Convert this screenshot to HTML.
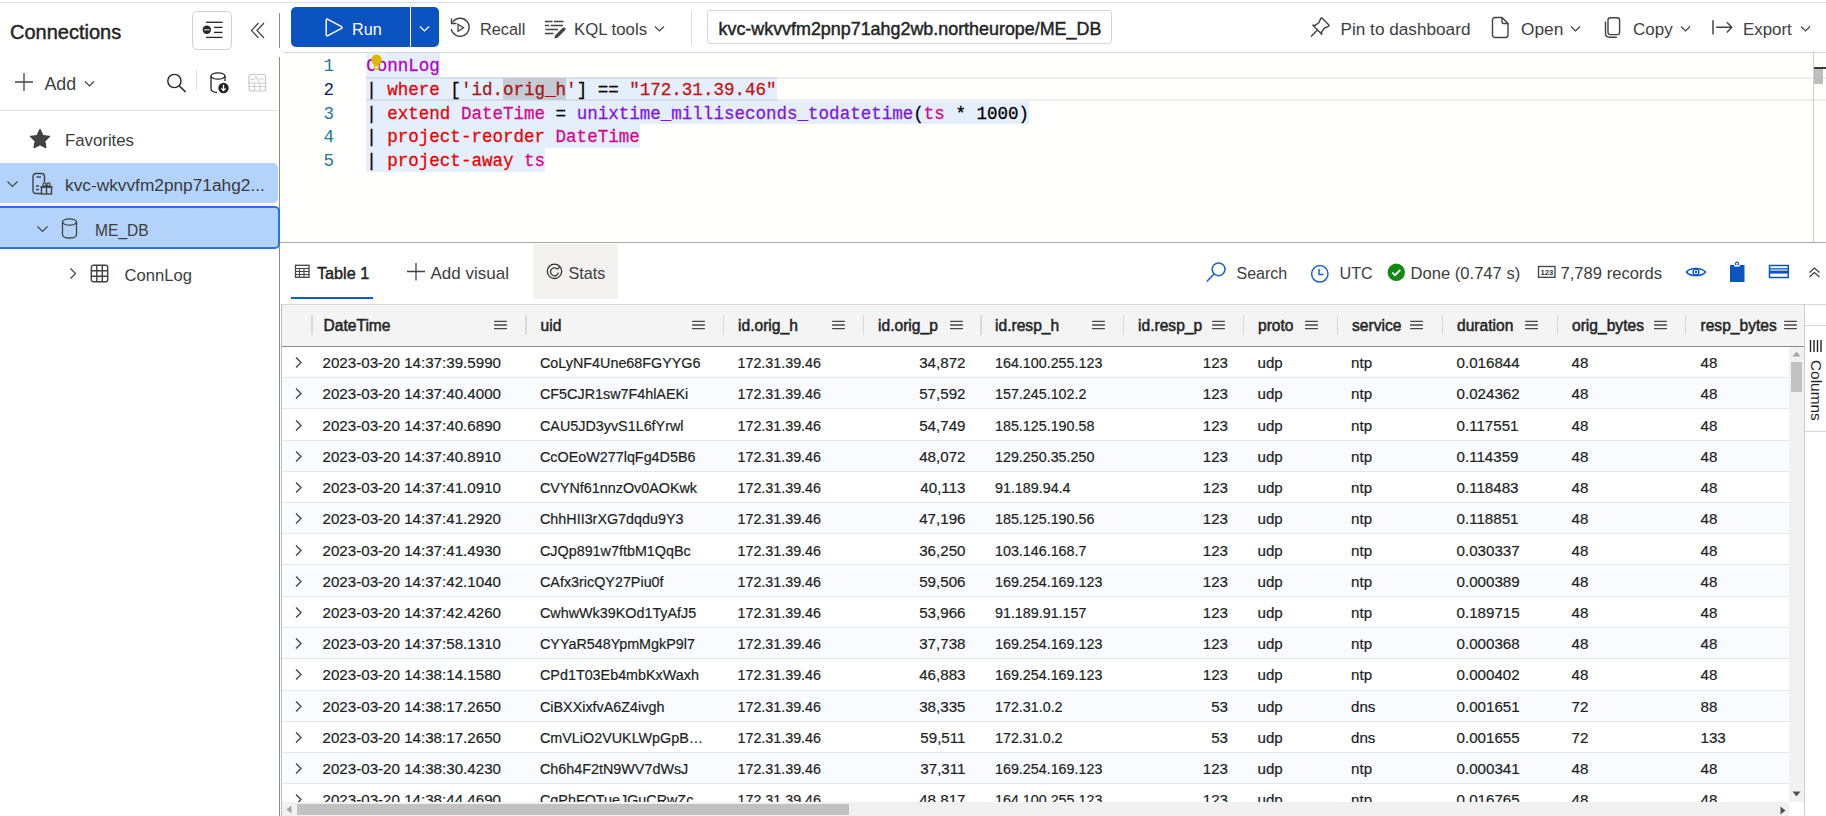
<!DOCTYPE html>
<html><head><meta charset="utf-8"><style>
html,body{margin:0;padding:0;width:1826px;height:816px;overflow:hidden;background:#fff;}
body{position:relative;font-family:'Liberation Sans',sans-serif;}
.t{position:absolute;white-space:nowrap;}
.r{position:absolute;}
svg.r{overflow:visible;}
</style></head><body>
<div class="r" style="left:0px;top:2px;width:1826px;height:1px;background:#e1e1e1;"></div>
<div class="t" style="left:10.00px;top:22px;font-size:20px;line-height:20px;color:#242424;font-weight:400;font-family:'Liberation Sans', sans-serif;-webkit-text-stroke:0.45px #242424;">Connections</div>
<div class="r" style="left:192px;top:11px;width:39.5px;height:38.8px;background:#fff;border:1px solid #d1d1d1;border-radius:5px;box-sizing:border-box"></div>
<svg class="r" style="left:200px;top:19px;" width="24" height="22" viewBox="0 0 24 22" fill="none"><line x1="6.1" y1="3.3" x2="22.5" y2="3.3" stroke="#242424" stroke-width="1.3"/><line x1="14" y1="8.4" x2="22.5" y2="8.4" stroke="#242424" stroke-width="1.3"/><line x1="14" y1="13.4" x2="22.5" y2="13.4" stroke="#242424" stroke-width="1.3"/><line x1="6.1" y1="18.4" x2="22.5" y2="18.4" stroke="#242424" stroke-width="1.3"/><circle cx="6.8" cy="10.8" r="4.2" fill="#242424"/><line x1="4" y1="10.8" x2="9.6" y2="10.8" stroke="#ccc" stroke-width="1.3"/></svg>
<svg class="r" style="left:250px;top:21px;" width="16" height="20" viewBox="0 0 16 20" fill="none"><path d="M8.5 2 L1.5 9.5 L8.5 17 M14 2 L7 9.5 L14 17" stroke="#424242" stroke-width="1.2"/></svg>
<div class="r" style="left:279px;top:13px;width:1px;height:35px;background:#8a8a8a;"></div>
<div class="r" style="left:279px;top:57px;width:1px;height:759px;background:#8a8a8a;"></div>
<svg class="r" style="left:14px;top:72px;" width="20" height="20" viewBox="0 0 20 20" fill="none"><path d="M10 1 V19 M1 10 H19" stroke="#424242" stroke-width="1.3"/></svg>
<div class="t" style="left:44.50px;top:76px;font-size:17.8px;line-height:17.8px;color:#3d3d3d;font-weight:400;font-family:'Liberation Sans', sans-serif;">Add</div>
<svg class="r" style="left:84px;top:80px;" width="12" height="8" viewBox="0 0 12 8" fill="none"><path d="M1 1.5 L5.5 6 L10 1.5" stroke="#424242" stroke-width="1.2"/></svg>
<svg class="r" style="left:165px;top:72px;" width="24" height="22" viewBox="0 0 24 22" fill="none"><circle cx="9.4" cy="9" r="6.6" stroke="#242424" stroke-width="1.4"/><path d="M14.2 13.8 L20.6 20" stroke="#242424" stroke-width="1.6"/></svg>
<div class="r" style="left:196px;top:70px;width:1px;height:20px;background:#e0e0e0;"></div>
<svg class="r" style="left:208px;top:71px;" width="24" height="24" viewBox="0 0 24 24" fill="none"><path d="M3 5 V18 C3 20 6 21.5 9 21.5 M17 5 V10" stroke="#242424" stroke-width="1.3"/><ellipse cx="10" cy="5" rx="7" ry="3.2" stroke="#242424" stroke-width="1.3"/><circle cx="15.5" cy="17" r="5.2" fill="#242424"/><path d="M15.5 13.8 V19.5 M13.3 17.4 L15.5 19.6 L17.7 17.4" stroke="#fff" stroke-width="1.3"/></svg>
<svg class="r" style="left:247px;top:73px;" width="21" height="19" viewBox="0 0 21 19" fill="none"><rect x="2" y="1.5" width="16.5" height="16.5" rx="2" stroke="#c8c8c8" stroke-width="1.2"/><path d="M4 6.5 L7 6.5 L9 3.5 L11.5 8 L13.5 5.5 L16.5 6.5" stroke="#c8c8c8" stroke-width="1"/><path d="M2 10 H18.5 M2 13.5 H18.5 M7.5 10 V18 M13 10 V18" stroke="#d0d0d0" stroke-width="1.2"/></svg>
<div class="r" style="left:0px;top:110px;width:279px;height:1px;background:#e1e1e1;"></div>
<svg class="r" style="left:27.5px;top:127px;" width="24" height="23" viewBox="0 0 24 23" fill="none"><path d="M12.00 2.60 L14.94 8.55 L21.51 9.51 L16.76 14.15 L17.88 20.69 L12.00 17.60 L6.12 20.69 L7.24 14.15 L2.49 9.51 L9.06 8.55 Z" fill="#424242" stroke="#424242" stroke-width="1.3" stroke-linejoin="round"/></svg>
<div class="t" style="left:65.00px;top:133px;font-size:16.8px;line-height:16.8px;color:#3d3d3d;font-weight:400;font-family:'Liberation Sans', sans-serif;">Favorites</div>
<div class="r" style="left:-5px;top:163px;width:283px;height:40px;background:#b3d3fb;border-radius:5px"></div>
<svg class="r" style="left:6px;top:180px;" width="13" height="9" viewBox="0 0 13 9" fill="none"><path d="M1.5 1.5 L6.5 6.5 L11.5 1.5" stroke="#424242" stroke-width="1.2"/></svg>
<svg class="r" style="left:31px;top:172px;" width="23" height="24" viewBox="0 0 23 24" fill="none"><path d="M10 21.5 H5 C3.2 21.5 2 20.3 2 18.5 V4.5 C2 2.7 3.2 1.5 5 1.5 H10.5 C12.3 1.5 13.5 2.7 13.5 4.5 V10" stroke="#424242" stroke-width="1.4"/><path d="M5.5 5 H10" stroke="#424242" stroke-width="1.4"/><path d="M5 14 H8 M5 17.5 H8" stroke="#424242" stroke-width="1.4"/><rect x="10.5" y="15" width="10" height="7" stroke="#424242" stroke-width="1.4"/><path d="M9.5 15 H21.5 M15.5 13 V22" stroke="#424242" stroke-width="1.4"/><circle cx="13.5" cy="12.5" r="1.6" stroke="#424242" stroke-width="1.2"/><circle cx="17.5" cy="12.5" r="1.6" stroke="#424242" stroke-width="1.2"/></svg>
<div class="t" style="left:65.00px;top:177px;font-size:17.3px;line-height:17.3px;color:#3a3a3a;font-weight:400;font-family:'Liberation Sans', sans-serif;">kvc-wkvvfm2pnp71ahg2...</div>
<div class="r" style="left:-4px;top:206px;width:283.5px;height:42.5px;background:#b3d3fb;border:2px solid #2a70e6;border-radius:5px;box-sizing:border-box"></div>
<svg class="r" style="left:36px;top:225px;" width="13" height="9" viewBox="0 0 13 9" fill="none"><path d="M1.5 1.5 L6.5 6.5 L11.5 1.5" stroke="#424242" stroke-width="1.2"/></svg>
<svg class="r" style="left:60px;top:217px;" width="19" height="23" viewBox="0 0 19 23" fill="none"><ellipse cx="9.5" cy="5" rx="7" ry="3.2" stroke="#424242" stroke-width="1.3"/><path d="M2.5 5 V17.5 C2.5 19.5 5.5 21 9.5 21 C13.5 21 16.5 19.5 16.5 17.5 V5" stroke="#424242" stroke-width="1.3"/></svg>
<div class="t" style="left:95.00px;top:223px;font-size:15.6px;line-height:15.6px;color:#3d3d3d;font-weight:400;font-family:'Liberation Sans', sans-serif;">ME_DB</div>
<svg class="r" style="left:69px;top:267px;" width="9" height="13" viewBox="0 0 9 13" fill="none"><path d="M1.5 1.5 L6.5 6.5 L1.5 11.5" stroke="#424242" stroke-width="1.2"/></svg>
<svg class="r" style="left:90px;top:264px;" width="20" height="20" viewBox="0 0 20 20" fill="none"><rect x="1.3" y="1.3" width="16.4" height="16.4" rx="2" stroke="#424242" stroke-width="1.4"/><path d="M1.3 6.8 H17.7 M1.3 12.3 H17.7 M6.8 1.3 V17.7 M12.3 1.3 V17.7" stroke="#424242" stroke-width="1.4"/></svg>
<div class="t" style="left:124.50px;top:268px;font-size:16.6px;line-height:16.6px;color:#3d3d3d;font-weight:400;font-family:'Liberation Sans', sans-serif;">ConnLog</div>
<div class="r" style="left:291px;top:7px;width:148px;height:40px;background:#0b53c1;border-radius:5px"></div>
<div class="r" style="left:410px;top:7px;width:1px;height:40px;background:#ffffff;"></div>
<svg class="r" style="left:323px;top:17px;" width="21" height="21" viewBox="0 0 21 21" fill="none"><path d="M3.2 3.2 C3.2 2.2 4 1.8 4.9 2.3 L18.5 9.6 C19.3 10.1 19.3 11 18.5 11.4 L4.9 18.7 C4 19.2 3.2 18.7 3.2 17.8 Z" stroke="#fff" stroke-width="1.4"/></svg>
<div class="t" style="left:352.00px;top:21px;font-size:16.2px;line-height:16.2px;color:#ffffff;font-weight:400;font-family:'Liberation Sans', sans-serif;">Run</div>
<svg class="r" style="left:419px;top:25px;" width="12" height="8" viewBox="0 0 12 8" fill="none"><path d="M1 1.5 L5.5 6 L10 1.5" stroke="#fff" stroke-width="1.2"/></svg>
<svg class="r" style="left:448px;top:16px;" width="24" height="24" viewBox="0 0 24 24" fill="none"><path d="M4.5 6.5 A9 9 0 1 1 3.3 13" stroke="#424242" stroke-width="1.4"/><path d="M2.5 2.5 V7.5 H7.5" stroke="#424242" stroke-width="1.4" transform="translate(1,0)"/><path d="M10 8.3 L15.5 11.8 L10 15.3 Z" stroke="#424242" stroke-width="1.3"/></svg>
<div class="t" style="left:480.00px;top:21px;font-size:16.3px;line-height:16.3px;color:#3d3d3d;font-weight:400;font-family:'Liberation Sans', sans-serif;">Recall</div>
<svg class="r" style="left:543px;top:18px;" width="24" height="22" viewBox="0 0 24 22" fill="none"><path d="M2 3.5 H9.5 M11 3.5 H20.5 M2 7.5 H6 M7.5 7.5 H20 M2.5 11.5 H15 M2 15.5 H10.5" stroke="#424242" stroke-width="1.3"/><path d="M12 17.5 L19.5 10 C20.3 9.2 21.8 9.2 22.3 10 C22.8 10.7 22.6 11.6 22 12.2 L14.5 19.7 L11.5 20.5 Z" fill="#424242"/></svg>
<div class="t" style="left:574.00px;top:22px;font-size:16.8px;line-height:16.8px;color:#3d3d3d;font-weight:400;font-family:'Liberation Sans', sans-serif;">KQL tools</div>
<svg class="r" style="left:654px;top:25px;" width="12" height="8" viewBox="0 0 12 8" fill="none"><path d="M1 1.5 L5.5 6 L10 1.5" stroke="#424242" stroke-width="1.2"/></svg>
<div class="r" style="left:691px;top:10px;width:1px;height:36px;background:#e0e0e0;"></div>
<div class="r" style="left:707px;top:10px;width:405px;height:34px;background:#fff;border:1px solid #d6d6d6;border-radius:3px;box-sizing:border-box"></div>
<div class="t" style="left:718.50px;top:21px;font-size:17.9px;line-height:17.9px;color:#242424;font-weight:400;font-family:'Liberation Sans', sans-serif;-webkit-text-stroke:0.45px #242424;">kvc-wkvvfm2pnp71ahg2wb.northeurope/ME_DB</div>
<svg class="r" style="left:1309px;top:16px;" width="22" height="22" viewBox="0 0 22 22" fill="none"><path d="M8.5 14 L2 20.5" stroke="#424242" stroke-width="1.4"/><path d="M13.2 2.3 L19.7 8.8 C20.2 9.3 20 10 19.4 10.3 L15.5 12 L12.6 15.8 L12.8 18.2 L3.8 9.2 L6.2 9.4 L10 6.5 L11.7 2.6 C12 2 12.7 1.8 13.2 2.3 Z" stroke="#424242" stroke-width="1.4" stroke-linejoin="round"/></svg>
<div class="t" style="left:1340.50px;top:21px;font-size:17.2px;line-height:17.2px;color:#3d3d3d;font-weight:400;font-family:'Liberation Sans', sans-serif;">Pin to dashboard</div>
<svg class="r" style="left:1491px;top:16px;" width="19" height="23" viewBox="0 0 19 23" fill="none"><path d="M4 1.5 H11 L17 7.5 V19 C17 20.4 16 21.5 14.5 21.5 H4 C2.6 21.5 1.5 20.4 1.5 19 V4 C1.5 2.6 2.6 1.5 4 1.5 Z M11 1.5 V6 C11 7 11.5 7.5 12.5 7.5 H17" stroke="#424242" stroke-width="1.4" stroke-linejoin="round"/></svg>
<div class="t" style="left:1521.00px;top:21px;font-size:17.3px;line-height:17.3px;color:#3d3d3d;font-weight:400;font-family:'Liberation Sans', sans-serif;">Open</div>
<svg class="r" style="left:1570px;top:25px;" width="12" height="8" viewBox="0 0 12 8" fill="none"><path d="M1 1.5 L5.5 6 L10 1.5" stroke="#424242" stroke-width="1.2"/></svg>
<svg class="r" style="left:1602px;top:16px;" width="20" height="23" viewBox="0 0 20 23" fill="none"><rect x="6" y="1.8" width="11.6" height="16.8" rx="2.3" stroke="#424242" stroke-width="1.4"/><path d="M3.5 5.5 V17.5 C3.5 19.8 5.2 21.2 7.5 21.2 H14.8" stroke="#424242" stroke-width="1.4"/></svg>
<div class="t" style="left:1633.00px;top:21px;font-size:17.0px;line-height:17.0px;color:#3d3d3d;font-weight:400;font-family:'Liberation Sans', sans-serif;">Copy</div>
<svg class="r" style="left:1680px;top:25px;" width="12" height="8" viewBox="0 0 12 8" fill="none"><path d="M1 1.5 L5.5 6 L10 1.5" stroke="#424242" stroke-width="1.2"/></svg>
<svg class="r" style="left:1709px;top:17px;" width="25" height="20" viewBox="0 0 25 20" fill="none"><path d="M4 3.3 V17.6" stroke="#424242" stroke-width="1.5"/><path d="M7.2 10.3 H22.8 M17.8 5.3 L22.8 10.3 L17.8 15.5" stroke="#424242" stroke-width="1.4"/></svg>
<div class="t" style="left:1743.00px;top:22px;font-size:16.9px;line-height:16.9px;color:#3d3d3d;font-weight:400;font-family:'Liberation Sans', sans-serif;">Export</div>
<svg class="r" style="left:1799.5px;top:25px;" width="12" height="8" viewBox="0 0 12 8" fill="none"><path d="M1 1.5 L5.5 6 L10 1.5" stroke="#424242" stroke-width="1.2"/></svg>
<div class="r" style="left:283px;top:52px;width:1543px;height:1px;background:#d6d6d6;"></div>
<div class="r" style="left:280px;top:53px;width:1546px;height:189px;background:#fffffe;"></div>
<div class="r" style="left:366.2px;top:53.0px;width:73.67px;height:23.75px;background:#e5eefb;"></div>
<div class="r" style="left:366.2px;top:76.75px;width:410.44px;height:23.75px;background:#e5eefb;"></div>
<div class="r" style="left:366.2px;top:100.5px;width:663.01px;height:23.75px;background:#e5eefb;"></div>
<div class="r" style="left:366.2px;top:124.25px;width:273.62px;height:23.75px;background:#e5eefb;"></div>
<div class="r" style="left:366.2px;top:148.0px;width:178.91px;height:23.8px;background:#e5eefb;"></div>
<div class="r" style="left:366.2px;top:53.3px;width:19.7px;height:19.3px;background:#eaf3fd;"></div>
<div class="r" style="left:366px;top:77px;width:1460px;height:2px;background:rgba(0,0,0,0.065);"></div>
<div class="r" style="left:366px;top:99px;width:1460px;height:2px;background:rgba(0,0,0,0.065);"></div>
<div class="r" style="left:503.01px;top:77.5px;width:63.14px;height:22px;background:#c6cbd3;"></div>
<div class="t" style="left:323.50px;top:58px;font-size:17.54px;line-height:17.54px;color:#237893;font-weight:400;font-family:'Liberation Mono', monospace;transform-origin:0 13px;transform:scaleY(1.09)">1</div>
<div class="t" style="left:323.50px;top:82px;font-size:17.54px;line-height:17.54px;color:#0b216f;font-weight:400;font-family:'Liberation Mono', monospace;transform-origin:0 13px;transform:scaleY(1.09)">2</div>
<div class="t" style="left:323.50px;top:106px;font-size:17.54px;line-height:17.54px;color:#237893;font-weight:400;font-family:'Liberation Mono', monospace;transform-origin:0 13px;transform:scaleY(1.09)">3</div>
<div class="t" style="left:323.50px;top:129px;font-size:17.54px;line-height:17.54px;color:#237893;font-weight:400;font-family:'Liberation Mono', monospace;transform-origin:0 13px;transform:scaleY(1.09)">4</div>
<div class="t" style="left:323.50px;top:153px;font-size:17.54px;line-height:17.54px;color:#237893;font-weight:400;font-family:'Liberation Mono', monospace;transform-origin:0 13px;transform:scaleY(1.09)">5</div>
<div class="t" style="left:366.20px;top:58px;font-size:17.54px;line-height:17.54px;color:#000;font-weight:400;font-family:'Liberation Mono', monospace;white-space:pre;-webkit-text-stroke:0.25px currentColor;transform-origin:0 13px;transform:scaleY(1.09)"><span style="color:#b000c8">ConnLog</span></div>
<div class="t" style="left:366.20px;top:82px;font-size:17.54px;line-height:17.54px;color:#000;font-weight:400;font-family:'Liberation Mono', monospace;white-space:pre;-webkit-text-stroke:0.25px currentColor;transform-origin:0 13px;transform:scaleY(1.09)"><span style="color:#000">| </span><span style="color:#e80000">where</span><span style="color:#000"> [</span><span style="color:#a31515">'id.</span><span style="color:#a31515">orig_h</span><span style="color:#a31515">'</span><span style="color:#000">] == </span><span style="color:#c40f0f">"172.31.39.46"</span></div>
<div class="t" style="left:366.20px;top:106px;font-size:17.54px;line-height:17.54px;color:#000;font-weight:400;font-family:'Liberation Mono', monospace;white-space:pre;-webkit-text-stroke:0.25px currentColor;transform-origin:0 13px;transform:scaleY(1.09)"><span style="color:#000">| </span><span style="color:#e80000">extend</span><span style="color:#000"> </span><span style="color:#d4068c">DateTime</span><span style="color:#000"> = </span><span style="color:#7b16e6">unixtime_milliseconds_todatetime</span><span style="color:#000">(</span><span style="color:#d4068c">ts</span><span style="color:#000"> * 1000)</span></div>
<div class="t" style="left:366.20px;top:129px;font-size:17.54px;line-height:17.54px;color:#000;font-weight:400;font-family:'Liberation Mono', monospace;white-space:pre;-webkit-text-stroke:0.25px currentColor;transform-origin:0 13px;transform:scaleY(1.09)"><span style="color:#000">| </span><span style="color:#e80000">project-reorder</span><span style="color:#000"> </span><span style="color:#d4068c">DateTime</span></div>
<div class="t" style="left:366.20px;top:153px;font-size:17.54px;line-height:17.54px;color:#000;font-weight:400;font-family:'Liberation Mono', monospace;white-space:pre;-webkit-text-stroke:0.25px currentColor;transform-origin:0 13px;transform:scaleY(1.09)"><span style="color:#000">| </span><span style="color:#e80000">project-away</span><span style="color:#000"> </span><span style="color:#d4068c">ts</span></div>
<svg class="r" style="left:369px;top:53px;" width="15" height="19" viewBox="0 0 15 19" fill="none"><circle cx="7.5" cy="6.7" r="5.2" fill="#e0b800"/><rect x="4.9" y="10" width="5.2" height="7" fill="#e0b800"/><rect x="6.2" y="13.2" width="2.6" height="2.5" fill="#f4f0d8"/></svg>
<div class="r" style="left:1813px;top:53px;width:1px;height:190px;background:#cfcfcf;"></div>
<div class="r" style="left:1814px;top:67px;width:12px;height:2px;background:#3a3a3a;"></div>
<div class="r" style="left:1814px;top:69px;width:9px;height:15px;background:#bdbdbd;"></div>
<div class="r" style="left:280px;top:242px;width:1546px;height:1px;background:#a8a8a8;"></div>
<div class="r" style="left:533px;top:244px;width:85px;height:54.5px;background:#f3f2f1;"></div>
<svg class="r" style="left:294px;top:264px;" width="17" height="15" viewBox="0 0 17 15" fill="none"><rect x="1.5" y="1.3" width="13.5" height="12" stroke="#424242" stroke-width="1.3"/><path d="M1.5 4.5 H15 M1.5 7.5 H15 M1.5 10.5 H15 M5.5 4.5 V13 M10 4.5 V13" stroke="#424242" stroke-width="1.1"/></svg>
<div class="t" style="left:317.00px;top:265px;font-size:16.2px;line-height:16.2px;color:#242424;font-weight:400;font-family:'Liberation Sans', sans-serif;-webkit-text-stroke:0.45px #242424;">Table 1</div>
<div class="r" style="left:291px;top:297px;width:82px;height:2px;background:#0f5bd0;"></div>
<svg class="r" style="left:406px;top:262px;" width="20" height="19" viewBox="0 0 20 19" fill="none"><path d="M10 1 V18.5 M1 9.5 H19" stroke="#424242" stroke-width="1.3"/></svg>
<div class="t" style="left:430.50px;top:265px;font-size:17.0px;line-height:17.0px;color:#3d3d3d;font-weight:400;font-family:'Liberation Sans', sans-serif;">Add visual</div>
<svg class="r" style="left:545px;top:263px;" width="18" height="17" viewBox="0 0 18 17" fill="none"><circle cx="9.5" cy="8.3" r="7.2" stroke="#333" stroke-width="1.3"/><path d="M12.56 6.23 A4.0 4.0 0 1 0 13.44 9.49" stroke="#333" stroke-width="1.3"/><path d="M12.56 6.23 L14.6 3.6" stroke="#333" stroke-width="1.2"/></svg>
<div class="t" style="left:568.50px;top:265px;font-size:16.2px;line-height:16.2px;color:#3d3d3d;font-weight:400;font-family:'Liberation Sans', sans-serif;">Stats</div>
<svg class="r" style="left:1205px;top:261px;" width="23" height="23" viewBox="0 0 23 23" fill="none"><circle cx="13.6" cy="8.3" r="6.4" stroke="#1a5fd0" stroke-width="1.5"/><path d="M9 13 L1.8 20.5" stroke="#1a5fd0" stroke-width="1.6"/></svg>
<div class="t" style="left:1236.50px;top:266px;font-size:16.0px;line-height:16.0px;color:#3d3d3d;font-weight:400;font-family:'Liberation Sans', sans-serif;">Search</div>
<svg class="r" style="left:1310px;top:264px;" width="20" height="20" viewBox="0 0 20 20" fill="none"><circle cx="9.8" cy="9.8" r="8.2" stroke="#1a5fd0" stroke-width="1.5"/><path d="M9 5 V10.5 H13.5" stroke="#1a5fd0" stroke-width="1.5"/></svg>
<div class="t" style="left:1339.50px;top:265px;font-size:16.2px;line-height:16.2px;color:#3d3d3d;font-weight:400;font-family:'Liberation Sans', sans-serif;">UTC</div>
<svg class="r" style="left:1387px;top:263px;" width="19" height="19" viewBox="0 0 19 19" fill="none"><circle cx="9.3" cy="9.3" r="8.7" fill="#128a12"/><path d="M5.3 9.6 L8 12.2 L13.3 6.8" stroke="#fff" stroke-width="1.8"/></svg>
<div class="t" style="left:1410.50px;top:266px;font-size:16.6px;line-height:16.6px;color:#3d3d3d;font-weight:400;font-family:'Liberation Sans', sans-serif;">Done (0.747 s)</div>
<svg class="r" style="left:1537px;top:265px;" width="20" height="14" viewBox="0 0 20 14" fill="none"><rect x="1.5" y="1.5" width="16.5" height="10.8" stroke="#424242" stroke-width="1.3"/></svg>
<div class="t" style="left:1540.60px;top:269px;font-size:7.6px;line-height:7.6px;color:#303030;font-weight:700;font-family:'Liberation Sans', sans-serif;">123</div>
<div class="t" style="left:1560.50px;top:266px;font-size:16.6px;line-height:16.6px;color:#3d3d3d;font-weight:400;font-family:'Liberation Sans', sans-serif;">7,789 records</div>
<svg class="r" style="left:1685px;top:266px;" width="22" height="12" viewBox="0 0 22 12" fill="none"><path d="M1.5 6 C5 1.2 16.5 1.2 20.5 6 C16.5 10.8 5 10.8 1.5 6 Z" stroke="#0b55c3" stroke-width="1.5"/><circle cx="11" cy="6" r="2.9" stroke="#0b55c3" stroke-width="1.4"/><circle cx="11" cy="6" r="1.2" fill="#0b55c3"/></svg>
<svg class="r" style="left:1729px;top:261px;" width="17" height="22" viewBox="0 0 17 22" fill="none"><path d="M1 4 H6 V2.5 C6 1.2 7 0.5 8 0.5 C9 0.5 10 1.2 10 2.5 V4 H15.5 V21 H1 Z" fill="#0b55c3"/><circle cx="8" cy="2.8" r="1" fill="#fff"/><rect x="5.3" y="4" width="5.4" height="1.6" fill="#fff"/></svg>
<svg class="r" style="left:1768px;top:264px;" width="22" height="15" viewBox="0 0 22 15" fill="none"><rect x="1.5" y="1.5" width="18.8" height="12" stroke="#0b55c3" stroke-width="1.5"/><rect x="1.5" y="4.2" width="18.8" height="1.3" fill="#0b55c3"/><rect x="1.5" y="6.6" width="18.8" height="3" fill="#0b55c3"/></svg>
<svg class="r" style="left:1808px;top:267px;" width="14" height="11" viewBox="0 0 14 11" fill="none"><path d="M1.5 5.5 L6.5 1 L11.5 5.5 M1.5 10 L6.5 5.5 L11.5 10" stroke="#424242" stroke-width="1.3"/></svg>
<div class="r" style="left:281px;top:304px;width:1523px;height:1px;background:#d8d8d8;"></div>
<div class="r" style="left:282px;top:305px;width:1522px;height:41px;background:#f4f4f4;"></div>
<div class="r" style="left:281px;top:345.5px;width:1523px;height:1.5px;background:#8c8c8c;"></div>
<div class="r" style="left:281px;top:304px;width:1px;height:512px;background:#b9bec4;"></div>
<div class="r" style="left:311px;top:315px;width:1.5px;height:20px;background:#d5dadf;"></div>
<div class="r" style="left:525px;top:315px;width:1.5px;height:20px;background:#d5dadf;"></div>
<div class="r" style="left:722.5px;top:315px;width:1.5px;height:20px;background:#d5dadf;"></div>
<div class="r" style="left:862.5px;top:315px;width:1.5px;height:20px;background:#d5dadf;"></div>
<div class="r" style="left:980px;top:315px;width:1.5px;height:20px;background:#d5dadf;"></div>
<div class="r" style="left:1122.5px;top:315px;width:1.5px;height:20px;background:#d5dadf;"></div>
<div class="r" style="left:1242.5px;top:315px;width:1.5px;height:20px;background:#d5dadf;"></div>
<div class="r" style="left:1336.5px;top:315px;width:1.5px;height:20px;background:#d5dadf;"></div>
<div class="r" style="left:1441.5px;top:315px;width:1.5px;height:20px;background:#d5dadf;"></div>
<div class="r" style="left:1556.5px;top:315px;width:1.5px;height:20px;background:#d5dadf;"></div>
<div class="r" style="left:1684.5px;top:315px;width:1.5px;height:20px;background:#d5dadf;"></div>
<div class="t" style="left:323.50px;top:318px;font-size:15.6px;line-height:15.6px;color:#242424;font-weight:400;font-family:'Liberation Sans', sans-serif;-webkit-text-stroke:0.5px #242424;">DateTime</div>
<svg class="r" style="left:494px;top:320px;" width="13" height="11" viewBox="0 0 13 11" fill="none"><path d="M0.6 1.3 H12.4 M0.6 5 H12.4 M0.6 8.6 H12.4" stroke="#474747" stroke-width="1.3" stroke-linecap="round"/></svg>
<div class="t" style="left:540.50px;top:318px;font-size:15.6px;line-height:15.6px;color:#242424;font-weight:400;font-family:'Liberation Sans', sans-serif;-webkit-text-stroke:0.5px #242424;">uid</div>
<svg class="r" style="left:691.5px;top:320px;" width="13" height="11" viewBox="0 0 13 11" fill="none"><path d="M0.6 1.3 H12.4 M0.6 5 H12.4 M0.6 8.6 H12.4" stroke="#474747" stroke-width="1.3" stroke-linecap="round"/></svg>
<div class="t" style="left:738.00px;top:318px;font-size:15.6px;line-height:15.6px;color:#242424;font-weight:400;font-family:'Liberation Sans', sans-serif;-webkit-text-stroke:0.5px #242424;">id.orig_h</div>
<svg class="r" style="left:832px;top:320px;" width="13" height="11" viewBox="0 0 13 11" fill="none"><path d="M0.6 1.3 H12.4 M0.6 5 H12.4 M0.6 8.6 H12.4" stroke="#474747" stroke-width="1.3" stroke-linecap="round"/></svg>
<div class="t" style="left:878.00px;top:318px;font-size:15.6px;line-height:15.6px;color:#242424;font-weight:400;font-family:'Liberation Sans', sans-serif;-webkit-text-stroke:0.5px #242424;">id.orig_p</div>
<svg class="r" style="left:950px;top:320px;" width="13" height="11" viewBox="0 0 13 11" fill="none"><path d="M0.6 1.3 H12.4 M0.6 5 H12.4 M0.6 8.6 H12.4" stroke="#474747" stroke-width="1.3" stroke-linecap="round"/></svg>
<div class="t" style="left:995.00px;top:318px;font-size:15.6px;line-height:15.6px;color:#242424;font-weight:400;font-family:'Liberation Sans', sans-serif;-webkit-text-stroke:0.5px #242424;">id.resp_h</div>
<svg class="r" style="left:1091.5px;top:320px;" width="13" height="11" viewBox="0 0 13 11" fill="none"><path d="M0.6 1.3 H12.4 M0.6 5 H12.4 M0.6 8.6 H12.4" stroke="#474747" stroke-width="1.3" stroke-linecap="round"/></svg>
<div class="t" style="left:1138.00px;top:318px;font-size:15.6px;line-height:15.6px;color:#242424;font-weight:400;font-family:'Liberation Sans', sans-serif;-webkit-text-stroke:0.5px #242424;">id.resp_p</div>
<svg class="r" style="left:1211.5px;top:320px;" width="13" height="11" viewBox="0 0 13 11" fill="none"><path d="M0.6 1.3 H12.4 M0.6 5 H12.4 M0.6 8.6 H12.4" stroke="#474747" stroke-width="1.3" stroke-linecap="round"/></svg>
<div class="t" style="left:1258.00px;top:318px;font-size:15.6px;line-height:15.6px;color:#242424;font-weight:400;font-family:'Liberation Sans', sans-serif;-webkit-text-stroke:0.5px #242424;">proto</div>
<svg class="r" style="left:1305px;top:320px;" width="13" height="11" viewBox="0 0 13 11" fill="none"><path d="M0.6 1.3 H12.4 M0.6 5 H12.4 M0.6 8.6 H12.4" stroke="#474747" stroke-width="1.3" stroke-linecap="round"/></svg>
<div class="t" style="left:1352.00px;top:318px;font-size:15.6px;line-height:15.6px;color:#242424;font-weight:400;font-family:'Liberation Sans', sans-serif;-webkit-text-stroke:0.5px #242424;">service</div>
<svg class="r" style="left:1410px;top:320px;" width="13" height="11" viewBox="0 0 13 11" fill="none"><path d="M0.6 1.3 H12.4 M0.6 5 H12.4 M0.6 8.6 H12.4" stroke="#474747" stroke-width="1.3" stroke-linecap="round"/></svg>
<div class="t" style="left:1457.00px;top:318px;font-size:15.6px;line-height:15.6px;color:#242424;font-weight:400;font-family:'Liberation Sans', sans-serif;-webkit-text-stroke:0.5px #242424;">duration</div>
<svg class="r" style="left:1525px;top:320px;" width="13" height="11" viewBox="0 0 13 11" fill="none"><path d="M0.6 1.3 H12.4 M0.6 5 H12.4 M0.6 8.6 H12.4" stroke="#474747" stroke-width="1.3" stroke-linecap="round"/></svg>
<div class="t" style="left:1572.00px;top:318px;font-size:15.6px;line-height:15.6px;color:#242424;font-weight:400;font-family:'Liberation Sans', sans-serif;-webkit-text-stroke:0.5px #242424;">orig_bytes</div>
<svg class="r" style="left:1654px;top:320px;" width="13" height="11" viewBox="0 0 13 11" fill="none"><path d="M0.6 1.3 H12.4 M0.6 5 H12.4 M0.6 8.6 H12.4" stroke="#474747" stroke-width="1.3" stroke-linecap="round"/></svg>
<div class="t" style="left:1700.50px;top:318px;font-size:15.6px;line-height:15.6px;color:#242424;font-weight:400;font-family:'Liberation Sans', sans-serif;-webkit-text-stroke:0.5px #242424;">resp_bytes</div>
<svg class="r" style="left:1784px;top:320px;" width="13" height="11" viewBox="0 0 13 11" fill="none"><path d="M0.6 1.3 H12.4 M0.6 5 H12.4 M0.6 8.6 H12.4" stroke="#474747" stroke-width="1.3" stroke-linecap="round"/></svg>
<div class="r" style="left:282px;top:347px;width:1507px;height:455px;overflow:hidden">
<div class="r" style="left:0;top:-1.00px;width:1507px;height:31.25px;background:#ffffff"></div>
<div class="r" style="left:0;top:30.25px;width:1507px;height:31.25px;background:#fafbfe"></div>
<div class="r" style="left:0;top:61.50px;width:1507px;height:31.25px;background:#ffffff"></div>
<div class="r" style="left:0;top:92.75px;width:1507px;height:31.25px;background:#fafbfe"></div>
<div class="r" style="left:0;top:124.00px;width:1507px;height:31.25px;background:#ffffff"></div>
<div class="r" style="left:0;top:155.25px;width:1507px;height:31.25px;background:#fafbfe"></div>
<div class="r" style="left:0;top:186.50px;width:1507px;height:31.25px;background:#ffffff"></div>
<div class="r" style="left:0;top:217.75px;width:1507px;height:31.25px;background:#fafbfe"></div>
<div class="r" style="left:0;top:249.00px;width:1507px;height:31.25px;background:#ffffff"></div>
<div class="r" style="left:0;top:280.25px;width:1507px;height:31.25px;background:#fafbfe"></div>
<div class="r" style="left:0;top:311.50px;width:1507px;height:31.25px;background:#ffffff"></div>
<div class="r" style="left:0;top:342.75px;width:1507px;height:31.25px;background:#fafbfe"></div>
<div class="r" style="left:0;top:374.00px;width:1507px;height:31.25px;background:#ffffff"></div>
<div class="r" style="left:0;top:405.25px;width:1507px;height:31.25px;background:#fafbfe"></div>
<div class="r" style="left:0;top:436.50px;width:1507px;height:31.25px;background:#ffffff"></div>
<div class="r" style="left:0;top:30px;width:1507px;height:1px;background:#e3e6ea"></div>
<div class="r" style="left:0;top:61px;width:1507px;height:1px;background:#e3e6ea"></div>
<div class="r" style="left:0;top:93px;width:1507px;height:1px;background:#e3e6ea"></div>
<div class="r" style="left:0;top:124px;width:1507px;height:1px;background:#e3e6ea"></div>
<div class="r" style="left:0;top:155px;width:1507px;height:1px;background:#e3e6ea"></div>
<div class="r" style="left:0;top:186px;width:1507px;height:1px;background:#e3e6ea"></div>
<div class="r" style="left:0;top:217px;width:1507px;height:1px;background:#e3e6ea"></div>
<div class="r" style="left:0;top:249px;width:1507px;height:1px;background:#e3e6ea"></div>
<div class="r" style="left:0;top:280px;width:1507px;height:1px;background:#e3e6ea"></div>
<div class="r" style="left:0;top:311px;width:1507px;height:1px;background:#e3e6ea"></div>
<div class="r" style="left:0;top:343px;width:1507px;height:1px;background:#e3e6ea"></div>
<div class="r" style="left:0;top:374px;width:1507px;height:1px;background:#e3e6ea"></div>
<div class="r" style="left:0;top:405px;width:1507px;height:1px;background:#e3e6ea"></div>
<div class="r" style="left:0;top:436px;width:1507px;height:1px;background:#e3e6ea"></div>
<div class="r" style="left:0;top:467px;width:1507px;height:1px;background:#e3e6ea"></div>
</div>
<svg class="r" style="left:294px;top:356px;" width="10" height="12" viewBox="0 0 10 12" fill="none"><path d="M2 1.5 L7 6.5 L2 11.5" stroke="#424242" stroke-width="1.3"/></svg>
<div class="t" style="left:322.50px;top:355px;font-size:15.15px;line-height:15.15px;color:#201f1e;font-weight:400;font-family:'Liberation Sans', sans-serif;-webkit-text-stroke:0.2px #201f1e;">2023-03-20 14:37:39.5990</div>
<div class="t" style="left:540.00px;top:356px;font-size:14.35px;line-height:14.35px;color:#201f1e;font-weight:400;font-family:'Liberation Sans', sans-serif;-webkit-text-stroke:0.2px #201f1e;">CoLyNF4Une68FGYYG6</div>
<div class="t" style="left:737.50px;top:356px;font-size:14.3px;line-height:14.3px;color:#201f1e;font-weight:400;font-family:'Liberation Sans', sans-serif;-webkit-text-stroke:0.2px #201f1e;">172.31.39.46</div>
<div class="t" style="right:860.50px;top:355px;font-size:15.15px;line-height:15.15px;color:#201f1e;font-weight:400;-webkit-text-stroke:0.2px #201f1e;">34,872</div>
<div class="t" style="left:995.00px;top:356px;font-size:14.3px;line-height:14.3px;color:#201f1e;font-weight:400;font-family:'Liberation Sans', sans-serif;-webkit-text-stroke:0.2px #201f1e;">164.100.255.123</div>
<div class="t" style="right:598.00px;top:355px;font-size:15.15px;line-height:15.15px;color:#201f1e;font-weight:400;-webkit-text-stroke:0.2px #201f1e;">123</div>
<div class="t" style="left:1257.50px;top:355px;font-size:15.15px;line-height:15.15px;color:#201f1e;font-weight:400;font-family:'Liberation Sans', sans-serif;-webkit-text-stroke:0.2px #201f1e;">udp</div>
<div class="t" style="left:1351.00px;top:355px;font-size:15.15px;line-height:15.15px;color:#201f1e;font-weight:400;font-family:'Liberation Sans', sans-serif;-webkit-text-stroke:0.2px #201f1e;">ntp</div>
<div class="t" style="left:1456.50px;top:355px;font-size:15.15px;line-height:15.15px;color:#201f1e;font-weight:400;font-family:'Liberation Sans', sans-serif;-webkit-text-stroke:0.2px #201f1e;">0.016844</div>
<div class="t" style="left:1571.50px;top:355px;font-size:15.15px;line-height:15.15px;color:#201f1e;font-weight:400;font-family:'Liberation Sans', sans-serif;-webkit-text-stroke:0.2px #201f1e;">48</div>
<div class="t" style="left:1700.50px;top:355px;font-size:15.15px;line-height:15.15px;color:#201f1e;font-weight:400;font-family:'Liberation Sans', sans-serif;-webkit-text-stroke:0.2px #201f1e;">48</div>
<svg class="r" style="left:294px;top:387px;" width="10" height="12" viewBox="0 0 10 12" fill="none"><path d="M2 1.5 L7 6.5 L2 11.5" stroke="#424242" stroke-width="1.3"/></svg>
<div class="t" style="left:322.50px;top:386px;font-size:15.15px;line-height:15.15px;color:#201f1e;font-weight:400;font-family:'Liberation Sans', sans-serif;-webkit-text-stroke:0.2px #201f1e;">2023-03-20 14:37:40.4000</div>
<div class="t" style="left:540.00px;top:387px;font-size:14.35px;line-height:14.35px;color:#201f1e;font-weight:400;font-family:'Liberation Sans', sans-serif;-webkit-text-stroke:0.2px #201f1e;">CF5CJR1sw7F4hlAEKi</div>
<div class="t" style="left:737.50px;top:387px;font-size:14.3px;line-height:14.3px;color:#201f1e;font-weight:400;font-family:'Liberation Sans', sans-serif;-webkit-text-stroke:0.2px #201f1e;">172.31.39.46</div>
<div class="t" style="right:860.50px;top:386px;font-size:15.15px;line-height:15.15px;color:#201f1e;font-weight:400;-webkit-text-stroke:0.2px #201f1e;">57,592</div>
<div class="t" style="left:995.00px;top:387px;font-size:14.3px;line-height:14.3px;color:#201f1e;font-weight:400;font-family:'Liberation Sans', sans-serif;-webkit-text-stroke:0.2px #201f1e;">157.245.102.2</div>
<div class="t" style="right:598.00px;top:386px;font-size:15.15px;line-height:15.15px;color:#201f1e;font-weight:400;-webkit-text-stroke:0.2px #201f1e;">123</div>
<div class="t" style="left:1257.50px;top:386px;font-size:15.15px;line-height:15.15px;color:#201f1e;font-weight:400;font-family:'Liberation Sans', sans-serif;-webkit-text-stroke:0.2px #201f1e;">udp</div>
<div class="t" style="left:1351.00px;top:386px;font-size:15.15px;line-height:15.15px;color:#201f1e;font-weight:400;font-family:'Liberation Sans', sans-serif;-webkit-text-stroke:0.2px #201f1e;">ntp</div>
<div class="t" style="left:1456.50px;top:386px;font-size:15.15px;line-height:15.15px;color:#201f1e;font-weight:400;font-family:'Liberation Sans', sans-serif;-webkit-text-stroke:0.2px #201f1e;">0.024362</div>
<div class="t" style="left:1571.50px;top:386px;font-size:15.15px;line-height:15.15px;color:#201f1e;font-weight:400;font-family:'Liberation Sans', sans-serif;-webkit-text-stroke:0.2px #201f1e;">48</div>
<div class="t" style="left:1700.50px;top:386px;font-size:15.15px;line-height:15.15px;color:#201f1e;font-weight:400;font-family:'Liberation Sans', sans-serif;-webkit-text-stroke:0.2px #201f1e;">48</div>
<svg class="r" style="left:294px;top:419px;" width="10" height="12" viewBox="0 0 10 12" fill="none"><path d="M2 1.5 L7 6.5 L2 11.5" stroke="#424242" stroke-width="1.3"/></svg>
<div class="t" style="left:322.50px;top:418px;font-size:15.15px;line-height:15.15px;color:#201f1e;font-weight:400;font-family:'Liberation Sans', sans-serif;-webkit-text-stroke:0.2px #201f1e;">2023-03-20 14:37:40.6890</div>
<div class="t" style="left:540.00px;top:419px;font-size:14.35px;line-height:14.35px;color:#201f1e;font-weight:400;font-family:'Liberation Sans', sans-serif;-webkit-text-stroke:0.2px #201f1e;">CAU5JD3yvS1L6fYrwl</div>
<div class="t" style="left:737.50px;top:419px;font-size:14.3px;line-height:14.3px;color:#201f1e;font-weight:400;font-family:'Liberation Sans', sans-serif;-webkit-text-stroke:0.2px #201f1e;">172.31.39.46</div>
<div class="t" style="right:860.50px;top:418px;font-size:15.15px;line-height:15.15px;color:#201f1e;font-weight:400;-webkit-text-stroke:0.2px #201f1e;">54,749</div>
<div class="t" style="left:995.00px;top:419px;font-size:14.3px;line-height:14.3px;color:#201f1e;font-weight:400;font-family:'Liberation Sans', sans-serif;-webkit-text-stroke:0.2px #201f1e;">185.125.190.58</div>
<div class="t" style="right:598.00px;top:418px;font-size:15.15px;line-height:15.15px;color:#201f1e;font-weight:400;-webkit-text-stroke:0.2px #201f1e;">123</div>
<div class="t" style="left:1257.50px;top:418px;font-size:15.15px;line-height:15.15px;color:#201f1e;font-weight:400;font-family:'Liberation Sans', sans-serif;-webkit-text-stroke:0.2px #201f1e;">udp</div>
<div class="t" style="left:1351.00px;top:418px;font-size:15.15px;line-height:15.15px;color:#201f1e;font-weight:400;font-family:'Liberation Sans', sans-serif;-webkit-text-stroke:0.2px #201f1e;">ntp</div>
<div class="t" style="left:1456.50px;top:418px;font-size:15.15px;line-height:15.15px;color:#201f1e;font-weight:400;font-family:'Liberation Sans', sans-serif;-webkit-text-stroke:0.2px #201f1e;">0.117551</div>
<div class="t" style="left:1571.50px;top:418px;font-size:15.15px;line-height:15.15px;color:#201f1e;font-weight:400;font-family:'Liberation Sans', sans-serif;-webkit-text-stroke:0.2px #201f1e;">48</div>
<div class="t" style="left:1700.50px;top:418px;font-size:15.15px;line-height:15.15px;color:#201f1e;font-weight:400;font-family:'Liberation Sans', sans-serif;-webkit-text-stroke:0.2px #201f1e;">48</div>
<svg class="r" style="left:294px;top:450px;" width="10" height="12" viewBox="0 0 10 12" fill="none"><path d="M2 1.5 L7 6.5 L2 11.5" stroke="#424242" stroke-width="1.3"/></svg>
<div class="t" style="left:322.50px;top:449px;font-size:15.15px;line-height:15.15px;color:#201f1e;font-weight:400;font-family:'Liberation Sans', sans-serif;-webkit-text-stroke:0.2px #201f1e;">2023-03-20 14:37:40.8910</div>
<div class="t" style="left:540.00px;top:450px;font-size:14.35px;line-height:14.35px;color:#201f1e;font-weight:400;font-family:'Liberation Sans', sans-serif;-webkit-text-stroke:0.2px #201f1e;">CcOEoW277lqFg4D5B6</div>
<div class="t" style="left:737.50px;top:450px;font-size:14.3px;line-height:14.3px;color:#201f1e;font-weight:400;font-family:'Liberation Sans', sans-serif;-webkit-text-stroke:0.2px #201f1e;">172.31.39.46</div>
<div class="t" style="right:860.50px;top:449px;font-size:15.15px;line-height:15.15px;color:#201f1e;font-weight:400;-webkit-text-stroke:0.2px #201f1e;">48,072</div>
<div class="t" style="left:995.00px;top:450px;font-size:14.3px;line-height:14.3px;color:#201f1e;font-weight:400;font-family:'Liberation Sans', sans-serif;-webkit-text-stroke:0.2px #201f1e;">129.250.35.250</div>
<div class="t" style="right:598.00px;top:449px;font-size:15.15px;line-height:15.15px;color:#201f1e;font-weight:400;-webkit-text-stroke:0.2px #201f1e;">123</div>
<div class="t" style="left:1257.50px;top:449px;font-size:15.15px;line-height:15.15px;color:#201f1e;font-weight:400;font-family:'Liberation Sans', sans-serif;-webkit-text-stroke:0.2px #201f1e;">udp</div>
<div class="t" style="left:1351.00px;top:449px;font-size:15.15px;line-height:15.15px;color:#201f1e;font-weight:400;font-family:'Liberation Sans', sans-serif;-webkit-text-stroke:0.2px #201f1e;">ntp</div>
<div class="t" style="left:1456.50px;top:449px;font-size:15.15px;line-height:15.15px;color:#201f1e;font-weight:400;font-family:'Liberation Sans', sans-serif;-webkit-text-stroke:0.2px #201f1e;">0.114359</div>
<div class="t" style="left:1571.50px;top:449px;font-size:15.15px;line-height:15.15px;color:#201f1e;font-weight:400;font-family:'Liberation Sans', sans-serif;-webkit-text-stroke:0.2px #201f1e;">48</div>
<div class="t" style="left:1700.50px;top:449px;font-size:15.15px;line-height:15.15px;color:#201f1e;font-weight:400;font-family:'Liberation Sans', sans-serif;-webkit-text-stroke:0.2px #201f1e;">48</div>
<svg class="r" style="left:294px;top:481px;" width="10" height="12" viewBox="0 0 10 12" fill="none"><path d="M2 1.5 L7 6.5 L2 11.5" stroke="#424242" stroke-width="1.3"/></svg>
<div class="t" style="left:322.50px;top:480px;font-size:15.15px;line-height:15.15px;color:#201f1e;font-weight:400;font-family:'Liberation Sans', sans-serif;-webkit-text-stroke:0.2px #201f1e;">2023-03-20 14:37:41.0910</div>
<div class="t" style="left:540.00px;top:481px;font-size:14.35px;line-height:14.35px;color:#201f1e;font-weight:400;font-family:'Liberation Sans', sans-serif;-webkit-text-stroke:0.2px #201f1e;">CVYNf61nnzOv0AOKwk</div>
<div class="t" style="left:737.50px;top:481px;font-size:14.3px;line-height:14.3px;color:#201f1e;font-weight:400;font-family:'Liberation Sans', sans-serif;-webkit-text-stroke:0.2px #201f1e;">172.31.39.46</div>
<div class="t" style="right:860.50px;top:480px;font-size:15.15px;line-height:15.15px;color:#201f1e;font-weight:400;-webkit-text-stroke:0.2px #201f1e;">40,113</div>
<div class="t" style="left:995.00px;top:481px;font-size:14.3px;line-height:14.3px;color:#201f1e;font-weight:400;font-family:'Liberation Sans', sans-serif;-webkit-text-stroke:0.2px #201f1e;">91.189.94.4</div>
<div class="t" style="right:598.00px;top:480px;font-size:15.15px;line-height:15.15px;color:#201f1e;font-weight:400;-webkit-text-stroke:0.2px #201f1e;">123</div>
<div class="t" style="left:1257.50px;top:480px;font-size:15.15px;line-height:15.15px;color:#201f1e;font-weight:400;font-family:'Liberation Sans', sans-serif;-webkit-text-stroke:0.2px #201f1e;">udp</div>
<div class="t" style="left:1351.00px;top:480px;font-size:15.15px;line-height:15.15px;color:#201f1e;font-weight:400;font-family:'Liberation Sans', sans-serif;-webkit-text-stroke:0.2px #201f1e;">ntp</div>
<div class="t" style="left:1456.50px;top:480px;font-size:15.15px;line-height:15.15px;color:#201f1e;font-weight:400;font-family:'Liberation Sans', sans-serif;-webkit-text-stroke:0.2px #201f1e;">0.118483</div>
<div class="t" style="left:1571.50px;top:480px;font-size:15.15px;line-height:15.15px;color:#201f1e;font-weight:400;font-family:'Liberation Sans', sans-serif;-webkit-text-stroke:0.2px #201f1e;">48</div>
<div class="t" style="left:1700.50px;top:480px;font-size:15.15px;line-height:15.15px;color:#201f1e;font-weight:400;font-family:'Liberation Sans', sans-serif;-webkit-text-stroke:0.2px #201f1e;">48</div>
<svg class="r" style="left:294px;top:512px;" width="10" height="12" viewBox="0 0 10 12" fill="none"><path d="M2 1.5 L7 6.5 L2 11.5" stroke="#424242" stroke-width="1.3"/></svg>
<div class="t" style="left:322.50px;top:511px;font-size:15.15px;line-height:15.15px;color:#201f1e;font-weight:400;font-family:'Liberation Sans', sans-serif;-webkit-text-stroke:0.2px #201f1e;">2023-03-20 14:37:41.2920</div>
<div class="t" style="left:540.00px;top:512px;font-size:14.35px;line-height:14.35px;color:#201f1e;font-weight:400;font-family:'Liberation Sans', sans-serif;-webkit-text-stroke:0.2px #201f1e;">ChhHII3rXG7dqdu9Y3</div>
<div class="t" style="left:737.50px;top:512px;font-size:14.3px;line-height:14.3px;color:#201f1e;font-weight:400;font-family:'Liberation Sans', sans-serif;-webkit-text-stroke:0.2px #201f1e;">172.31.39.46</div>
<div class="t" style="right:860.50px;top:511px;font-size:15.15px;line-height:15.15px;color:#201f1e;font-weight:400;-webkit-text-stroke:0.2px #201f1e;">47,196</div>
<div class="t" style="left:995.00px;top:512px;font-size:14.3px;line-height:14.3px;color:#201f1e;font-weight:400;font-family:'Liberation Sans', sans-serif;-webkit-text-stroke:0.2px #201f1e;">185.125.190.56</div>
<div class="t" style="right:598.00px;top:511px;font-size:15.15px;line-height:15.15px;color:#201f1e;font-weight:400;-webkit-text-stroke:0.2px #201f1e;">123</div>
<div class="t" style="left:1257.50px;top:511px;font-size:15.15px;line-height:15.15px;color:#201f1e;font-weight:400;font-family:'Liberation Sans', sans-serif;-webkit-text-stroke:0.2px #201f1e;">udp</div>
<div class="t" style="left:1351.00px;top:511px;font-size:15.15px;line-height:15.15px;color:#201f1e;font-weight:400;font-family:'Liberation Sans', sans-serif;-webkit-text-stroke:0.2px #201f1e;">ntp</div>
<div class="t" style="left:1456.50px;top:511px;font-size:15.15px;line-height:15.15px;color:#201f1e;font-weight:400;font-family:'Liberation Sans', sans-serif;-webkit-text-stroke:0.2px #201f1e;">0.118851</div>
<div class="t" style="left:1571.50px;top:511px;font-size:15.15px;line-height:15.15px;color:#201f1e;font-weight:400;font-family:'Liberation Sans', sans-serif;-webkit-text-stroke:0.2px #201f1e;">48</div>
<div class="t" style="left:1700.50px;top:511px;font-size:15.15px;line-height:15.15px;color:#201f1e;font-weight:400;font-family:'Liberation Sans', sans-serif;-webkit-text-stroke:0.2px #201f1e;">48</div>
<svg class="r" style="left:294px;top:544px;" width="10" height="12" viewBox="0 0 10 12" fill="none"><path d="M2 1.5 L7 6.5 L2 11.5" stroke="#424242" stroke-width="1.3"/></svg>
<div class="t" style="left:322.50px;top:543px;font-size:15.15px;line-height:15.15px;color:#201f1e;font-weight:400;font-family:'Liberation Sans', sans-serif;-webkit-text-stroke:0.2px #201f1e;">2023-03-20 14:37:41.4930</div>
<div class="t" style="left:540.00px;top:544px;font-size:14.35px;line-height:14.35px;color:#201f1e;font-weight:400;font-family:'Liberation Sans', sans-serif;-webkit-text-stroke:0.2px #201f1e;">CJQp891w7ftbM1QqBc</div>
<div class="t" style="left:737.50px;top:544px;font-size:14.3px;line-height:14.3px;color:#201f1e;font-weight:400;font-family:'Liberation Sans', sans-serif;-webkit-text-stroke:0.2px #201f1e;">172.31.39.46</div>
<div class="t" style="right:860.50px;top:543px;font-size:15.15px;line-height:15.15px;color:#201f1e;font-weight:400;-webkit-text-stroke:0.2px #201f1e;">36,250</div>
<div class="t" style="left:995.00px;top:544px;font-size:14.3px;line-height:14.3px;color:#201f1e;font-weight:400;font-family:'Liberation Sans', sans-serif;-webkit-text-stroke:0.2px #201f1e;">103.146.168.7</div>
<div class="t" style="right:598.00px;top:543px;font-size:15.15px;line-height:15.15px;color:#201f1e;font-weight:400;-webkit-text-stroke:0.2px #201f1e;">123</div>
<div class="t" style="left:1257.50px;top:543px;font-size:15.15px;line-height:15.15px;color:#201f1e;font-weight:400;font-family:'Liberation Sans', sans-serif;-webkit-text-stroke:0.2px #201f1e;">udp</div>
<div class="t" style="left:1351.00px;top:543px;font-size:15.15px;line-height:15.15px;color:#201f1e;font-weight:400;font-family:'Liberation Sans', sans-serif;-webkit-text-stroke:0.2px #201f1e;">ntp</div>
<div class="t" style="left:1456.50px;top:543px;font-size:15.15px;line-height:15.15px;color:#201f1e;font-weight:400;font-family:'Liberation Sans', sans-serif;-webkit-text-stroke:0.2px #201f1e;">0.030337</div>
<div class="t" style="left:1571.50px;top:543px;font-size:15.15px;line-height:15.15px;color:#201f1e;font-weight:400;font-family:'Liberation Sans', sans-serif;-webkit-text-stroke:0.2px #201f1e;">48</div>
<div class="t" style="left:1700.50px;top:543px;font-size:15.15px;line-height:15.15px;color:#201f1e;font-weight:400;font-family:'Liberation Sans', sans-serif;-webkit-text-stroke:0.2px #201f1e;">48</div>
<svg class="r" style="left:294px;top:575px;" width="10" height="12" viewBox="0 0 10 12" fill="none"><path d="M2 1.5 L7 6.5 L2 11.5" stroke="#424242" stroke-width="1.3"/></svg>
<div class="t" style="left:322.50px;top:574px;font-size:15.15px;line-height:15.15px;color:#201f1e;font-weight:400;font-family:'Liberation Sans', sans-serif;-webkit-text-stroke:0.2px #201f1e;">2023-03-20 14:37:42.1040</div>
<div class="t" style="left:540.00px;top:575px;font-size:14.35px;line-height:14.35px;color:#201f1e;font-weight:400;font-family:'Liberation Sans', sans-serif;-webkit-text-stroke:0.2px #201f1e;">CAfx3ricQY27Piu0f</div>
<div class="t" style="left:737.50px;top:575px;font-size:14.3px;line-height:14.3px;color:#201f1e;font-weight:400;font-family:'Liberation Sans', sans-serif;-webkit-text-stroke:0.2px #201f1e;">172.31.39.46</div>
<div class="t" style="right:860.50px;top:574px;font-size:15.15px;line-height:15.15px;color:#201f1e;font-weight:400;-webkit-text-stroke:0.2px #201f1e;">59,506</div>
<div class="t" style="left:995.00px;top:575px;font-size:14.3px;line-height:14.3px;color:#201f1e;font-weight:400;font-family:'Liberation Sans', sans-serif;-webkit-text-stroke:0.2px #201f1e;">169.254.169.123</div>
<div class="t" style="right:598.00px;top:574px;font-size:15.15px;line-height:15.15px;color:#201f1e;font-weight:400;-webkit-text-stroke:0.2px #201f1e;">123</div>
<div class="t" style="left:1257.50px;top:574px;font-size:15.15px;line-height:15.15px;color:#201f1e;font-weight:400;font-family:'Liberation Sans', sans-serif;-webkit-text-stroke:0.2px #201f1e;">udp</div>
<div class="t" style="left:1351.00px;top:574px;font-size:15.15px;line-height:15.15px;color:#201f1e;font-weight:400;font-family:'Liberation Sans', sans-serif;-webkit-text-stroke:0.2px #201f1e;">ntp</div>
<div class="t" style="left:1456.50px;top:574px;font-size:15.15px;line-height:15.15px;color:#201f1e;font-weight:400;font-family:'Liberation Sans', sans-serif;-webkit-text-stroke:0.2px #201f1e;">0.000389</div>
<div class="t" style="left:1571.50px;top:574px;font-size:15.15px;line-height:15.15px;color:#201f1e;font-weight:400;font-family:'Liberation Sans', sans-serif;-webkit-text-stroke:0.2px #201f1e;">48</div>
<div class="t" style="left:1700.50px;top:574px;font-size:15.15px;line-height:15.15px;color:#201f1e;font-weight:400;font-family:'Liberation Sans', sans-serif;-webkit-text-stroke:0.2px #201f1e;">48</div>
<svg class="r" style="left:294px;top:606px;" width="10" height="12" viewBox="0 0 10 12" fill="none"><path d="M2 1.5 L7 6.5 L2 11.5" stroke="#424242" stroke-width="1.3"/></svg>
<div class="t" style="left:322.50px;top:605px;font-size:15.15px;line-height:15.15px;color:#201f1e;font-weight:400;font-family:'Liberation Sans', sans-serif;-webkit-text-stroke:0.2px #201f1e;">2023-03-20 14:37:42.4260</div>
<div class="t" style="left:540.00px;top:606px;font-size:14.35px;line-height:14.35px;color:#201f1e;font-weight:400;font-family:'Liberation Sans', sans-serif;-webkit-text-stroke:0.2px #201f1e;">CwhwWk39KOd1TyAfJ5</div>
<div class="t" style="left:737.50px;top:606px;font-size:14.3px;line-height:14.3px;color:#201f1e;font-weight:400;font-family:'Liberation Sans', sans-serif;-webkit-text-stroke:0.2px #201f1e;">172.31.39.46</div>
<div class="t" style="right:860.50px;top:605px;font-size:15.15px;line-height:15.15px;color:#201f1e;font-weight:400;-webkit-text-stroke:0.2px #201f1e;">53,966</div>
<div class="t" style="left:995.00px;top:606px;font-size:14.3px;line-height:14.3px;color:#201f1e;font-weight:400;font-family:'Liberation Sans', sans-serif;-webkit-text-stroke:0.2px #201f1e;">91.189.91.157</div>
<div class="t" style="right:598.00px;top:605px;font-size:15.15px;line-height:15.15px;color:#201f1e;font-weight:400;-webkit-text-stroke:0.2px #201f1e;">123</div>
<div class="t" style="left:1257.50px;top:605px;font-size:15.15px;line-height:15.15px;color:#201f1e;font-weight:400;font-family:'Liberation Sans', sans-serif;-webkit-text-stroke:0.2px #201f1e;">udp</div>
<div class="t" style="left:1351.00px;top:605px;font-size:15.15px;line-height:15.15px;color:#201f1e;font-weight:400;font-family:'Liberation Sans', sans-serif;-webkit-text-stroke:0.2px #201f1e;">ntp</div>
<div class="t" style="left:1456.50px;top:605px;font-size:15.15px;line-height:15.15px;color:#201f1e;font-weight:400;font-family:'Liberation Sans', sans-serif;-webkit-text-stroke:0.2px #201f1e;">0.189715</div>
<div class="t" style="left:1571.50px;top:605px;font-size:15.15px;line-height:15.15px;color:#201f1e;font-weight:400;font-family:'Liberation Sans', sans-serif;-webkit-text-stroke:0.2px #201f1e;">48</div>
<div class="t" style="left:1700.50px;top:605px;font-size:15.15px;line-height:15.15px;color:#201f1e;font-weight:400;font-family:'Liberation Sans', sans-serif;-webkit-text-stroke:0.2px #201f1e;">48</div>
<svg class="r" style="left:294px;top:637px;" width="10" height="12" viewBox="0 0 10 12" fill="none"><path d="M2 1.5 L7 6.5 L2 11.5" stroke="#424242" stroke-width="1.3"/></svg>
<div class="t" style="left:322.50px;top:636px;font-size:15.15px;line-height:15.15px;color:#201f1e;font-weight:400;font-family:'Liberation Sans', sans-serif;-webkit-text-stroke:0.2px #201f1e;">2023-03-20 14:37:58.1310</div>
<div class="t" style="left:540.00px;top:637px;font-size:14.35px;line-height:14.35px;color:#201f1e;font-weight:400;font-family:'Liberation Sans', sans-serif;-webkit-text-stroke:0.2px #201f1e;">CYYaR548YpmMgkP9l7</div>
<div class="t" style="left:737.50px;top:637px;font-size:14.3px;line-height:14.3px;color:#201f1e;font-weight:400;font-family:'Liberation Sans', sans-serif;-webkit-text-stroke:0.2px #201f1e;">172.31.39.46</div>
<div class="t" style="right:860.50px;top:636px;font-size:15.15px;line-height:15.15px;color:#201f1e;font-weight:400;-webkit-text-stroke:0.2px #201f1e;">37,738</div>
<div class="t" style="left:995.00px;top:637px;font-size:14.3px;line-height:14.3px;color:#201f1e;font-weight:400;font-family:'Liberation Sans', sans-serif;-webkit-text-stroke:0.2px #201f1e;">169.254.169.123</div>
<div class="t" style="right:598.00px;top:636px;font-size:15.15px;line-height:15.15px;color:#201f1e;font-weight:400;-webkit-text-stroke:0.2px #201f1e;">123</div>
<div class="t" style="left:1257.50px;top:636px;font-size:15.15px;line-height:15.15px;color:#201f1e;font-weight:400;font-family:'Liberation Sans', sans-serif;-webkit-text-stroke:0.2px #201f1e;">udp</div>
<div class="t" style="left:1351.00px;top:636px;font-size:15.15px;line-height:15.15px;color:#201f1e;font-weight:400;font-family:'Liberation Sans', sans-serif;-webkit-text-stroke:0.2px #201f1e;">ntp</div>
<div class="t" style="left:1456.50px;top:636px;font-size:15.15px;line-height:15.15px;color:#201f1e;font-weight:400;font-family:'Liberation Sans', sans-serif;-webkit-text-stroke:0.2px #201f1e;">0.000368</div>
<div class="t" style="left:1571.50px;top:636px;font-size:15.15px;line-height:15.15px;color:#201f1e;font-weight:400;font-family:'Liberation Sans', sans-serif;-webkit-text-stroke:0.2px #201f1e;">48</div>
<div class="t" style="left:1700.50px;top:636px;font-size:15.15px;line-height:15.15px;color:#201f1e;font-weight:400;font-family:'Liberation Sans', sans-serif;-webkit-text-stroke:0.2px #201f1e;">48</div>
<svg class="r" style="left:294px;top:668px;" width="10" height="12" viewBox="0 0 10 12" fill="none"><path d="M2 1.5 L7 6.5 L2 11.5" stroke="#424242" stroke-width="1.3"/></svg>
<div class="t" style="left:322.50px;top:667px;font-size:15.15px;line-height:15.15px;color:#201f1e;font-weight:400;font-family:'Liberation Sans', sans-serif;-webkit-text-stroke:0.2px #201f1e;">2023-03-20 14:38:14.1580</div>
<div class="t" style="left:540.00px;top:668px;font-size:14.35px;line-height:14.35px;color:#201f1e;font-weight:400;font-family:'Liberation Sans', sans-serif;-webkit-text-stroke:0.2px #201f1e;">CPd1T03Eb4mbKxWaxh</div>
<div class="t" style="left:737.50px;top:668px;font-size:14.3px;line-height:14.3px;color:#201f1e;font-weight:400;font-family:'Liberation Sans', sans-serif;-webkit-text-stroke:0.2px #201f1e;">172.31.39.46</div>
<div class="t" style="right:860.50px;top:667px;font-size:15.15px;line-height:15.15px;color:#201f1e;font-weight:400;-webkit-text-stroke:0.2px #201f1e;">46,883</div>
<div class="t" style="left:995.00px;top:668px;font-size:14.3px;line-height:14.3px;color:#201f1e;font-weight:400;font-family:'Liberation Sans', sans-serif;-webkit-text-stroke:0.2px #201f1e;">169.254.169.123</div>
<div class="t" style="right:598.00px;top:667px;font-size:15.15px;line-height:15.15px;color:#201f1e;font-weight:400;-webkit-text-stroke:0.2px #201f1e;">123</div>
<div class="t" style="left:1257.50px;top:667px;font-size:15.15px;line-height:15.15px;color:#201f1e;font-weight:400;font-family:'Liberation Sans', sans-serif;-webkit-text-stroke:0.2px #201f1e;">udp</div>
<div class="t" style="left:1351.00px;top:667px;font-size:15.15px;line-height:15.15px;color:#201f1e;font-weight:400;font-family:'Liberation Sans', sans-serif;-webkit-text-stroke:0.2px #201f1e;">ntp</div>
<div class="t" style="left:1456.50px;top:667px;font-size:15.15px;line-height:15.15px;color:#201f1e;font-weight:400;font-family:'Liberation Sans', sans-serif;-webkit-text-stroke:0.2px #201f1e;">0.000402</div>
<div class="t" style="left:1571.50px;top:667px;font-size:15.15px;line-height:15.15px;color:#201f1e;font-weight:400;font-family:'Liberation Sans', sans-serif;-webkit-text-stroke:0.2px #201f1e;">48</div>
<div class="t" style="left:1700.50px;top:667px;font-size:15.15px;line-height:15.15px;color:#201f1e;font-weight:400;font-family:'Liberation Sans', sans-serif;-webkit-text-stroke:0.2px #201f1e;">48</div>
<svg class="r" style="left:294px;top:700px;" width="10" height="12" viewBox="0 0 10 12" fill="none"><path d="M2 1.5 L7 6.5 L2 11.5" stroke="#424242" stroke-width="1.3"/></svg>
<div class="t" style="left:322.50px;top:699px;font-size:15.15px;line-height:15.15px;color:#201f1e;font-weight:400;font-family:'Liberation Sans', sans-serif;-webkit-text-stroke:0.2px #201f1e;">2023-03-20 14:38:17.2650</div>
<div class="t" style="left:540.00px;top:700px;font-size:14.35px;line-height:14.35px;color:#201f1e;font-weight:400;font-family:'Liberation Sans', sans-serif;-webkit-text-stroke:0.2px #201f1e;">CiBXXixfvA6Z4ivgh</div>
<div class="t" style="left:737.50px;top:700px;font-size:14.3px;line-height:14.3px;color:#201f1e;font-weight:400;font-family:'Liberation Sans', sans-serif;-webkit-text-stroke:0.2px #201f1e;">172.31.39.46</div>
<div class="t" style="right:860.50px;top:699px;font-size:15.15px;line-height:15.15px;color:#201f1e;font-weight:400;-webkit-text-stroke:0.2px #201f1e;">38,335</div>
<div class="t" style="left:995.00px;top:700px;font-size:14.3px;line-height:14.3px;color:#201f1e;font-weight:400;font-family:'Liberation Sans', sans-serif;-webkit-text-stroke:0.2px #201f1e;">172.31.0.2</div>
<div class="t" style="right:598.00px;top:699px;font-size:15.15px;line-height:15.15px;color:#201f1e;font-weight:400;-webkit-text-stroke:0.2px #201f1e;">53</div>
<div class="t" style="left:1257.50px;top:699px;font-size:15.15px;line-height:15.15px;color:#201f1e;font-weight:400;font-family:'Liberation Sans', sans-serif;-webkit-text-stroke:0.2px #201f1e;">udp</div>
<div class="t" style="left:1351.00px;top:699px;font-size:15.15px;line-height:15.15px;color:#201f1e;font-weight:400;font-family:'Liberation Sans', sans-serif;-webkit-text-stroke:0.2px #201f1e;">dns</div>
<div class="t" style="left:1456.50px;top:699px;font-size:15.15px;line-height:15.15px;color:#201f1e;font-weight:400;font-family:'Liberation Sans', sans-serif;-webkit-text-stroke:0.2px #201f1e;">0.001651</div>
<div class="t" style="left:1571.50px;top:699px;font-size:15.15px;line-height:15.15px;color:#201f1e;font-weight:400;font-family:'Liberation Sans', sans-serif;-webkit-text-stroke:0.2px #201f1e;">72</div>
<div class="t" style="left:1700.50px;top:699px;font-size:15.15px;line-height:15.15px;color:#201f1e;font-weight:400;font-family:'Liberation Sans', sans-serif;-webkit-text-stroke:0.2px #201f1e;">88</div>
<svg class="r" style="left:294px;top:731px;" width="10" height="12" viewBox="0 0 10 12" fill="none"><path d="M2 1.5 L7 6.5 L2 11.5" stroke="#424242" stroke-width="1.3"/></svg>
<div class="t" style="left:322.50px;top:730px;font-size:15.15px;line-height:15.15px;color:#201f1e;font-weight:400;font-family:'Liberation Sans', sans-serif;-webkit-text-stroke:0.2px #201f1e;">2023-03-20 14:38:17.2650</div>
<div class="t" style="left:540.00px;top:731px;font-size:14.35px;line-height:14.35px;color:#201f1e;font-weight:400;font-family:'Liberation Sans', sans-serif;-webkit-text-stroke:0.2px #201f1e;">CmVLiO2VUKLWpGpB…</div>
<div class="t" style="left:737.50px;top:731px;font-size:14.3px;line-height:14.3px;color:#201f1e;font-weight:400;font-family:'Liberation Sans', sans-serif;-webkit-text-stroke:0.2px #201f1e;">172.31.39.46</div>
<div class="t" style="right:860.50px;top:730px;font-size:15.15px;line-height:15.15px;color:#201f1e;font-weight:400;-webkit-text-stroke:0.2px #201f1e;">59,511</div>
<div class="t" style="left:995.00px;top:731px;font-size:14.3px;line-height:14.3px;color:#201f1e;font-weight:400;font-family:'Liberation Sans', sans-serif;-webkit-text-stroke:0.2px #201f1e;">172.31.0.2</div>
<div class="t" style="right:598.00px;top:730px;font-size:15.15px;line-height:15.15px;color:#201f1e;font-weight:400;-webkit-text-stroke:0.2px #201f1e;">53</div>
<div class="t" style="left:1257.50px;top:730px;font-size:15.15px;line-height:15.15px;color:#201f1e;font-weight:400;font-family:'Liberation Sans', sans-serif;-webkit-text-stroke:0.2px #201f1e;">udp</div>
<div class="t" style="left:1351.00px;top:730px;font-size:15.15px;line-height:15.15px;color:#201f1e;font-weight:400;font-family:'Liberation Sans', sans-serif;-webkit-text-stroke:0.2px #201f1e;">dns</div>
<div class="t" style="left:1456.50px;top:730px;font-size:15.15px;line-height:15.15px;color:#201f1e;font-weight:400;font-family:'Liberation Sans', sans-serif;-webkit-text-stroke:0.2px #201f1e;">0.001655</div>
<div class="t" style="left:1571.50px;top:730px;font-size:15.15px;line-height:15.15px;color:#201f1e;font-weight:400;font-family:'Liberation Sans', sans-serif;-webkit-text-stroke:0.2px #201f1e;">72</div>
<div class="t" style="left:1700.50px;top:730px;font-size:15.15px;line-height:15.15px;color:#201f1e;font-weight:400;font-family:'Liberation Sans', sans-serif;-webkit-text-stroke:0.2px #201f1e;">133</div>
<svg class="r" style="left:294px;top:762px;" width="10" height="12" viewBox="0 0 10 12" fill="none"><path d="M2 1.5 L7 6.5 L2 11.5" stroke="#424242" stroke-width="1.3"/></svg>
<div class="t" style="left:322.50px;top:761px;font-size:15.15px;line-height:15.15px;color:#201f1e;font-weight:400;font-family:'Liberation Sans', sans-serif;-webkit-text-stroke:0.2px #201f1e;">2023-03-20 14:38:30.4230</div>
<div class="t" style="left:540.00px;top:762px;font-size:14.35px;line-height:14.35px;color:#201f1e;font-weight:400;font-family:'Liberation Sans', sans-serif;-webkit-text-stroke:0.2px #201f1e;">Ch6h4F2tN9WV7dWsJ</div>
<div class="t" style="left:737.50px;top:762px;font-size:14.3px;line-height:14.3px;color:#201f1e;font-weight:400;font-family:'Liberation Sans', sans-serif;-webkit-text-stroke:0.2px #201f1e;">172.31.39.46</div>
<div class="t" style="right:860.50px;top:761px;font-size:15.15px;line-height:15.15px;color:#201f1e;font-weight:400;-webkit-text-stroke:0.2px #201f1e;">37,311</div>
<div class="t" style="left:995.00px;top:762px;font-size:14.3px;line-height:14.3px;color:#201f1e;font-weight:400;font-family:'Liberation Sans', sans-serif;-webkit-text-stroke:0.2px #201f1e;">169.254.169.123</div>
<div class="t" style="right:598.00px;top:761px;font-size:15.15px;line-height:15.15px;color:#201f1e;font-weight:400;-webkit-text-stroke:0.2px #201f1e;">123</div>
<div class="t" style="left:1257.50px;top:761px;font-size:15.15px;line-height:15.15px;color:#201f1e;font-weight:400;font-family:'Liberation Sans', sans-serif;-webkit-text-stroke:0.2px #201f1e;">udp</div>
<div class="t" style="left:1351.00px;top:761px;font-size:15.15px;line-height:15.15px;color:#201f1e;font-weight:400;font-family:'Liberation Sans', sans-serif;-webkit-text-stroke:0.2px #201f1e;">ntp</div>
<div class="t" style="left:1456.50px;top:761px;font-size:15.15px;line-height:15.15px;color:#201f1e;font-weight:400;font-family:'Liberation Sans', sans-serif;-webkit-text-stroke:0.2px #201f1e;">0.000341</div>
<div class="t" style="left:1571.50px;top:761px;font-size:15.15px;line-height:15.15px;color:#201f1e;font-weight:400;font-family:'Liberation Sans', sans-serif;-webkit-text-stroke:0.2px #201f1e;">48</div>
<div class="t" style="left:1700.50px;top:761px;font-size:15.15px;line-height:15.15px;color:#201f1e;font-weight:400;font-family:'Liberation Sans', sans-serif;-webkit-text-stroke:0.2px #201f1e;">48</div>
<svg class="r" style="left:294px;top:793px;" width="10" height="12" viewBox="0 0 10 12" fill="none"><path d="M2 1.5 L7 6.5 L2 11.5" stroke="#424242" stroke-width="1.3"/></svg>
<div class="t" style="left:322.50px;top:792px;font-size:15.15px;line-height:15.15px;color:#201f1e;font-weight:400;font-family:'Liberation Sans', sans-serif;-webkit-text-stroke:0.2px #201f1e;">2023-03-20 14:38:44.4690</div>
<div class="t" style="left:540.00px;top:793px;font-size:14.35px;line-height:14.35px;color:#201f1e;font-weight:400;font-family:'Liberation Sans', sans-serif;-webkit-text-stroke:0.2px #201f1e;">CqPhFOTueJGuCRwZc</div>
<div class="t" style="left:737.50px;top:793px;font-size:14.3px;line-height:14.3px;color:#201f1e;font-weight:400;font-family:'Liberation Sans', sans-serif;-webkit-text-stroke:0.2px #201f1e;">172.31.39.46</div>
<div class="t" style="right:860.50px;top:792px;font-size:15.15px;line-height:15.15px;color:#201f1e;font-weight:400;-webkit-text-stroke:0.2px #201f1e;">48,817</div>
<div class="t" style="left:995.00px;top:793px;font-size:14.3px;line-height:14.3px;color:#201f1e;font-weight:400;font-family:'Liberation Sans', sans-serif;-webkit-text-stroke:0.2px #201f1e;">164.100.255.123</div>
<div class="t" style="right:598.00px;top:792px;font-size:15.15px;line-height:15.15px;color:#201f1e;font-weight:400;-webkit-text-stroke:0.2px #201f1e;">123</div>
<div class="t" style="left:1257.50px;top:792px;font-size:15.15px;line-height:15.15px;color:#201f1e;font-weight:400;font-family:'Liberation Sans', sans-serif;-webkit-text-stroke:0.2px #201f1e;">udp</div>
<div class="t" style="left:1351.00px;top:792px;font-size:15.15px;line-height:15.15px;color:#201f1e;font-weight:400;font-family:'Liberation Sans', sans-serif;-webkit-text-stroke:0.2px #201f1e;">ntp</div>
<div class="t" style="left:1456.50px;top:792px;font-size:15.15px;line-height:15.15px;color:#201f1e;font-weight:400;font-family:'Liberation Sans', sans-serif;-webkit-text-stroke:0.2px #201f1e;">0.016765</div>
<div class="t" style="left:1571.50px;top:792px;font-size:15.15px;line-height:15.15px;color:#201f1e;font-weight:400;font-family:'Liberation Sans', sans-serif;-webkit-text-stroke:0.2px #201f1e;">48</div>
<div class="t" style="left:1700.50px;top:792px;font-size:15.15px;line-height:15.15px;color:#201f1e;font-weight:400;font-family:'Liberation Sans', sans-serif;-webkit-text-stroke:0.2px #201f1e;">48</div>
<div class="r" style="left:1789px;top:347px;width:15px;height:455px;background:#f1f1f1;"></div>
<svg class="r" style="left:1792px;top:351px;" width="9" height="6" viewBox="0 0 9 6" fill="none"><path d="M0.5 5.5 L4.5 0.5 L8.5 5.5 Z" fill="#a3a3a3"/></svg>
<div class="r" style="left:1791px;top:362px;width:10.5px;height:30px;background:#c1c1c1;"></div>
<svg class="r" style="left:1792px;top:791px;" width="9" height="6" viewBox="0 0 9 6" fill="none"><path d="M0.5 0.5 L4.5 5.5 L8.5 0.5 Z" fill="#505050"/></svg>
<div class="r" style="left:282px;top:802px;width:1507px;height:14px;background:#f1f1f1;"></div>
<svg class="r" style="left:286px;top:805px;" width="6" height="9" viewBox="0 0 6 9" fill="none"><path d="M5.5 0.5 L0.5 4.5 L5.5 8.5 Z" fill="#a3a3a3"/></svg>
<div class="r" style="left:297px;top:804px;width:552px;height:10.5px;background:#c1c1c1;"></div>
<svg class="r" style="left:1780px;top:806px;" width="6" height="9" viewBox="0 0 6 9" fill="none"><path d="M0.5 0.5 L5.5 4.5 L0.5 8.5 Z" fill="#505050"/></svg>
<div class="r" style="left:1804px;top:304px;width:1px;height:512px;background:#c9ced4;"></div>
<div class="r" style="left:1805px;top:304px;width:21px;height:1px;background:#d8d8d8;"></div>
<div class="r" style="left:1805px;top:325px;width:21px;height:1px;background:#d6d6d6;"></div>
<div class="r" style="left:1805px;top:431px;width:21px;height:1px;background:#d6d6d6;"></div>
<svg class="r" style="left:1809px;top:339px;" width="13" height="14" viewBox="0 0 13 14" fill="none"><path d="M1.5 1 V13 M5 1 V13 M8.5 1 V13 M12 1 V13" stroke="#242424" stroke-width="1.4"/></svg>
<div class="t" style="left:1808.5px;top:360px;font-size:15.4px;line-height:15.4px;color:#242424;font-family:'Liberation Sans';transform-origin:0 0;transform:translate(15px,0) rotate(90deg)">Columns</div>
</body></html>
